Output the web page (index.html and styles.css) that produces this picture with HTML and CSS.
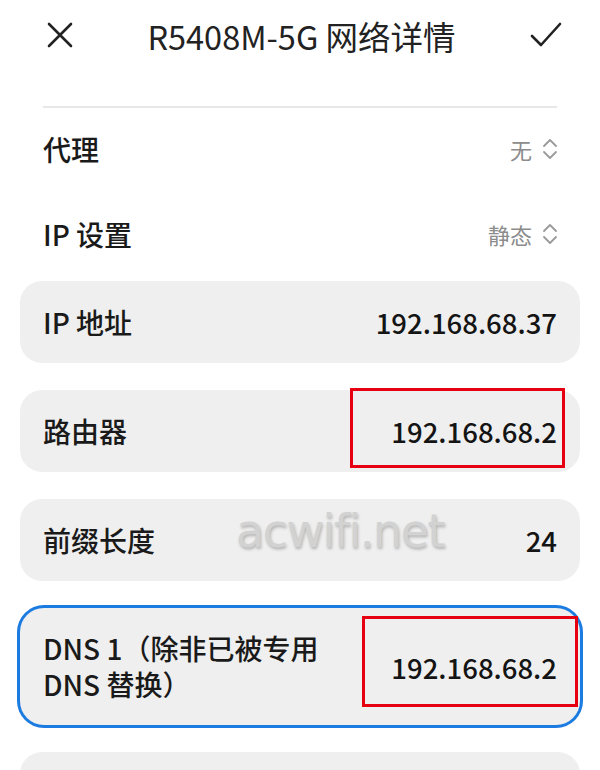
FILE: index.html
```
<!DOCTYPE html>
<html lang="zh-CN">
<head>
<meta charset="utf-8">
<link rel="stylesheet" href="styles.css">
</head>
<body>
<div class="page">
  <header class="topbar">
    <svg class="icon-close" viewBox="0 0 26 26" width="26" height="26"><path d="M2 2 L24 24 M24 2 L2 24" stroke="#222" stroke-width="2.6" fill="none" stroke-linecap="round"/></svg>
    <h1 class="title">R5408M-5G 网络详情</h1>
    <svg class="icon-check" viewBox="0 0 32 26" width="32" height="26"><path d="M2 14 L11 23 L30 2" stroke="#222" stroke-width="2.6" fill="none" stroke-linecap="round" stroke-linejoin="round"/></svg>
  </header>
  <div class="divider"></div>

  <div class="row">
    <span class="label">代理</span>
    <span class="select">无<svg class="updown" viewBox="0 0 16 24" width="16" height="24"><path d="M2 9 L8 3 L14 9 M2 15 L8 21 L14 15" stroke="#9a9a9a" stroke-width="1.8" fill="none" stroke-linecap="round" stroke-linejoin="round"/></svg></span>
  </div>
  <div class="row">
    <span class="label">IP 设置</span>
    <span class="select">静态<svg class="updown" viewBox="0 0 16 24" width="16" height="24"><path d="M2 9 L8 3 L14 9 M2 15 L8 21 L14 15" stroke="#9a9a9a" stroke-width="1.8" fill="none" stroke-linecap="round" stroke-linejoin="round"/></svg></span>
  </div>

  <div class="cards">
    <div class="card">
      <span class="label">IP 地址</span>
      <span class="value">192.168.68.37</span>
    </div>
    <div class="card">
      <span class="label">路由器</span>
      <span class="value">192.168.68.2</span>
      <div class="mark mark-router"></div>
    </div>
    <div class="card">
      <span class="label">前缀长度</span>
      <span class="value">24</span>
      <div class="watermark">acwifi.net</div>
    </div>
    <div class="card card-tall card-focus">
      <span class="label label-wrap">DNS 1（除非已被专用<br>DNS 替换）</span>
      <span class="value">192.168.68.2</span>
      <div class="mark mark-dns"></div>
    </div>
    <div class="card"></div>
  </div>
</div>
</body>
</html>
```
FILE: styles.css
```
* { box-sizing: border-box; }
html, body {
  margin: 0;
  padding: 0;
  background: #ffffff;
  overflow: hidden;
}
body {
  font-family: "Noto Sans CJK SC", "Noto Sans", sans-serif;
  color: #1a1a1a;
}
.page {
  width: 600px;
  height: 770px;
  overflow: hidden;
}
.topbar {
  height: 70px;
  display: flex;
  align-items: center;
  justify-content: space-between;
  padding: 0 38px 0 47px;
}
.title {
  margin: 0;
  font-size: 32.5px;
  font-weight: 400;
  color: #222;
}
.divider {
  margin: 36px 43px 0;
  height: 2px;
  background: #e8e8e8;
}
.row {
  height: 85px;
  display: flex;
  align-items: center;
  justify-content: space-between;
  padding: 0 42px 4px 43px;
}
.label {
  font-size: 28px;
  font-weight: 500;
  color: #1a1a1a;
}
.select {
  display: flex;
  align-items: center;
  gap: 10px;
  font-size: 22px;
  color: #8c8c8c;
}
.cards {
  padding: 3px 20px 0;
  display: flex;
  flex-direction: column;
  gap: 27px;
}
.card {
  position: relative;
  height: 82px;
  flex-shrink: 0;
  background: #efefef;
  border-radius: 22px;
  display: flex;
  align-items: center;
  justify-content: space-between;
  padding: 0 23px;
}
.card-tall { height: 117px; }
.card-focus {
  box-shadow: 0 0 0 3px #1c7be0;
  border-radius: 24px;
}
.label-wrap { line-height: 36px; margin-top: -2px; }
.value {
  font-size: 27.5px;
  font-weight: 500;
  color: #141414;
}
.mark {
  position: absolute;
  border: 3px solid #e60012;
}
.mark-router {
  left: 330px;
  top: -2px;
  width: 215px;
  height: 80px;
}
.mark-dns {
  left: 342px;
  top: 8px;
  width: 216px;
  height: 91px;
}
.watermark {
  position: absolute;
  left: 216px;
  top: 5px;
  font-family: "DejaVu Sans", sans-serif;
  font-size: 46px;
  color: #d2d2d2;
  text-shadow: 1px 2px 3px rgba(0,0,0,0.25);
  letter-spacing: -1.5px;
}
```
